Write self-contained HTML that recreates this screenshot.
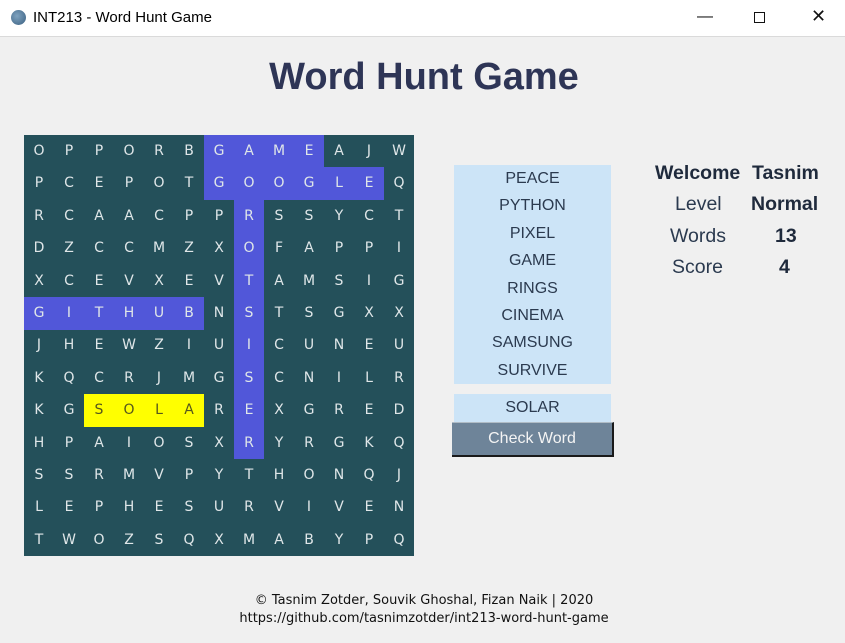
<!DOCTYPE html>
<html><head><meta charset="utf-8"><style>
*{margin:0;padding:0;box-sizing:border-box}
body{width:845px;height:643px;background:#f0f0f0;position:relative;overflow:hidden;font-family:"Liberation Sans",Arial,sans-serif}
#tb{position:absolute;left:0;top:0;width:845px;height:37px;background:#fff;border-bottom:1px solid #dadada}
#tb .t{position:absolute;left:33px;top:9px;font-size:15px;color:#000}
#tb .ic{position:absolute;left:11px;top:10px;width:15px;height:15px;border-radius:50%;background:radial-gradient(circle at 40% 40%,#7fa3c0,#3a5f80)}
.wc{position:absolute;top:5px;font-size:16px;color:#111}
h1{position:absolute;left:0;width:848px;top:56px;text-align:center;font-size:38px;font-weight:bold;color:#2e3556}
#grid{position:absolute;left:24px;top:135px;width:390px;height:421px;background:#24505a}
.hl{position:absolute;background:#5157d9}
.yl{position:absolute;background:#ffff00}
.c{position:absolute;width:30px;height:32.4px;line-height:32.4px;text-align:center;font-size:14px;color:#dfe6e8;font-family:"DejaVu Sans",sans-serif}
.c.y{color:#55571c}
#wl{position:absolute;left:454px;top:165px;width:157px;height:219px;background:#cce4f7}
#wl div{height:27.4px;line-height:27.4px;text-align:center;font-size:16px;color:#2b3a4f}
#in{position:absolute;left:454px;top:394px;width:157px;height:28px;background:#cce4f7;text-align:center;line-height:28px;font-size:16px;color:#2b3a4f}
#btn{position:absolute;left:452px;top:422px;width:162px;height:35px;background:#6e8499;border-right:2px solid #1a1a1a;border-bottom:2px solid #1a1a1a;border-top:1px solid #b0bcc6;color:#f4f4f4;text-align:center;line-height:32px;font-size:16px}
.s{position:absolute;font-size:19.5px;color:#2b3a4f}
.b{font-weight:bold;color:#1f2a3c}
#ft{position:absolute;left:0;width:848px;top:592px;text-align:center;color:#111;line-height:18px;font-family:"DejaVu Sans",sans-serif;font-size:13px}
</style></head><body>
<div id="tb"><div class="ic"></div><div class="t">INT213 - Word Hunt Game</div>
<div class="wc" style="left:697px;top:8px">&#8212;</div>
<div style="position:absolute;left:754px;top:12px;width:11px;height:11px;border:1px solid #111"></div>
<div class="wc" style="left:811px;top:6px;font-size:18px">&#10005;</div></div>
<h1>Word Hunt Game</h1>
<div id="grid">
<div class="hl" style="left:180px;top:0;width:120px;height:33px"></div>
<div class="hl" style="left:180px;top:32px;width:180px;height:33px"></div>
<div class="hl" style="left:210px;top:64px;width:30px;height:260px"></div>
<div class="hl" style="left:0;top:162px;width:180px;height:33px"></div>
<div class="yl" style="left:60px;top:259px;width:120px;height:33px"></div>
</div>
<div id="wl"><div>PEACE</div><div>PYTHON</div><div>PIXEL</div><div>GAME</div><div>RINGS</div><div>CINEMA</div><div>SAMSUNG</div><div>SURVIVE</div></div>
<div id="in">SOLAR</div>
<div id="btn">Check Word</div>
<div class="s b" style="left:655px;top:162px">Welcome</div>
<div class="s b" style="left:752px;top:162px">Tasnim</div>
<div class="s" style="left:675px;top:193px">Level</div>
<div class="s b" style="left:751px;top:193px">Normal</div>
<div class="s" style="left:670px;top:225px">Words</div>
<div class="s b" style="left:775px;top:225px">13</div>
<div class="s" style="left:672px;top:256px">Score</div>
<div class="s b" style="left:779px;top:256px">4</div>
<div id="ft">© Tasnim Zotder, Souvik Ghoshal, Fizan Naik | 2020<br>https://github.com/tasnimzotder/int213-word-hunt-game</div>
<div id="g2" style="position:absolute;left:24px;top:135px">
<div class="c" style="left:0px;top:0px">O</div><div class="c" style="left:30px;top:0px">P</div><div class="c" style="left:60px;top:0px">P</div><div class="c" style="left:90px;top:0px">O</div><div class="c" style="left:120px;top:0px">R</div><div class="c" style="left:150px;top:0px">B</div><div class="c" style="left:180px;top:0px">G</div><div class="c" style="left:210px;top:0px">A</div><div class="c" style="left:240px;top:0px">M</div><div class="c" style="left:270px;top:0px">E</div><div class="c" style="left:300px;top:0px">A</div><div class="c" style="left:330px;top:0px">J</div><div class="c" style="left:360px;top:0px">W</div>
<div class="c" style="left:0px;top:32.4px">P</div><div class="c" style="left:30px;top:32.4px">C</div><div class="c" style="left:60px;top:32.4px">E</div><div class="c" style="left:90px;top:32.4px">P</div><div class="c" style="left:120px;top:32.4px">O</div><div class="c" style="left:150px;top:32.4px">T</div><div class="c" style="left:180px;top:32.4px">G</div><div class="c" style="left:210px;top:32.4px">O</div><div class="c" style="left:240px;top:32.4px">O</div><div class="c" style="left:270px;top:32.4px">G</div><div class="c" style="left:300px;top:32.4px">L</div><div class="c" style="left:330px;top:32.4px">E</div><div class="c" style="left:360px;top:32.4px">Q</div>
<div class="c" style="left:0px;top:64.8px">R</div><div class="c" style="left:30px;top:64.8px">C</div><div class="c" style="left:60px;top:64.8px">A</div><div class="c" style="left:90px;top:64.8px">A</div><div class="c" style="left:120px;top:64.8px">C</div><div class="c" style="left:150px;top:64.8px">P</div><div class="c" style="left:180px;top:64.8px">P</div><div class="c" style="left:210px;top:64.8px">R</div><div class="c" style="left:240px;top:64.8px">S</div><div class="c" style="left:270px;top:64.8px">S</div><div class="c" style="left:300px;top:64.8px">Y</div><div class="c" style="left:330px;top:64.8px">C</div><div class="c" style="left:360px;top:64.8px">T</div>
<div class="c" style="left:0px;top:97.2px">D</div><div class="c" style="left:30px;top:97.2px">Z</div><div class="c" style="left:60px;top:97.2px">C</div><div class="c" style="left:90px;top:97.2px">C</div><div class="c" style="left:120px;top:97.2px">M</div><div class="c" style="left:150px;top:97.2px">Z</div><div class="c" style="left:180px;top:97.2px">X</div><div class="c" style="left:210px;top:97.2px">O</div><div class="c" style="left:240px;top:97.2px">F</div><div class="c" style="left:270px;top:97.2px">A</div><div class="c" style="left:300px;top:97.2px">P</div><div class="c" style="left:330px;top:97.2px">P</div><div class="c" style="left:360px;top:97.2px">I</div>
<div class="c" style="left:0px;top:129.6px">X</div><div class="c" style="left:30px;top:129.6px">C</div><div class="c" style="left:60px;top:129.6px">E</div><div class="c" style="left:90px;top:129.6px">V</div><div class="c" style="left:120px;top:129.6px">X</div><div class="c" style="left:150px;top:129.6px">E</div><div class="c" style="left:180px;top:129.6px">V</div><div class="c" style="left:210px;top:129.6px">T</div><div class="c" style="left:240px;top:129.6px">A</div><div class="c" style="left:270px;top:129.6px">M</div><div class="c" style="left:300px;top:129.6px">S</div><div class="c" style="left:330px;top:129.6px">I</div><div class="c" style="left:360px;top:129.6px">G</div>
<div class="c" style="left:0px;top:162px">G</div><div class="c" style="left:30px;top:162px">I</div><div class="c" style="left:60px;top:162px">T</div><div class="c" style="left:90px;top:162px">H</div><div class="c" style="left:120px;top:162px">U</div><div class="c" style="left:150px;top:162px">B</div><div class="c" style="left:180px;top:162px">N</div><div class="c" style="left:210px;top:162px">S</div><div class="c" style="left:240px;top:162px">T</div><div class="c" style="left:270px;top:162px">S</div><div class="c" style="left:300px;top:162px">G</div><div class="c" style="left:330px;top:162px">X</div><div class="c" style="left:360px;top:162px">X</div>
<div class="c" style="left:0px;top:194.4px">J</div><div class="c" style="left:30px;top:194.4px">H</div><div class="c" style="left:60px;top:194.4px">E</div><div class="c" style="left:90px;top:194.4px">W</div><div class="c" style="left:120px;top:194.4px">Z</div><div class="c" style="left:150px;top:194.4px">I</div><div class="c" style="left:180px;top:194.4px">U</div><div class="c" style="left:210px;top:194.4px">I</div><div class="c" style="left:240px;top:194.4px">C</div><div class="c" style="left:270px;top:194.4px">U</div><div class="c" style="left:300px;top:194.4px">N</div><div class="c" style="left:330px;top:194.4px">E</div><div class="c" style="left:360px;top:194.4px">U</div>
<div class="c" style="left:0px;top:226.8px">K</div><div class="c" style="left:30px;top:226.8px">Q</div><div class="c" style="left:60px;top:226.8px">C</div><div class="c" style="left:90px;top:226.8px">R</div><div class="c" style="left:120px;top:226.8px">J</div><div class="c" style="left:150px;top:226.8px">M</div><div class="c" style="left:180px;top:226.8px">G</div><div class="c" style="left:210px;top:226.8px">S</div><div class="c" style="left:240px;top:226.8px">C</div><div class="c" style="left:270px;top:226.8px">N</div><div class="c" style="left:300px;top:226.8px">I</div><div class="c" style="left:330px;top:226.8px">L</div><div class="c" style="left:360px;top:226.8px">R</div>
<div class="c" style="left:0px;top:259.2px">K</div><div class="c" style="left:30px;top:259.2px">G</div><div class="c y" style="left:60px;top:259.2px">S</div><div class="c y" style="left:90px;top:259.2px">O</div><div class="c y" style="left:120px;top:259.2px">L</div><div class="c y" style="left:150px;top:259.2px">A</div><div class="c" style="left:180px;top:259.2px">R</div><div class="c" style="left:210px;top:259.2px">E</div><div class="c" style="left:240px;top:259.2px">X</div><div class="c" style="left:270px;top:259.2px">G</div><div class="c" style="left:300px;top:259.2px">R</div><div class="c" style="left:330px;top:259.2px">E</div><div class="c" style="left:360px;top:259.2px">D</div>
<div class="c" style="left:0px;top:291.6px">H</div><div class="c" style="left:30px;top:291.6px">P</div><div class="c" style="left:60px;top:291.6px">A</div><div class="c" style="left:90px;top:291.6px">I</div><div class="c" style="left:120px;top:291.6px">O</div><div class="c" style="left:150px;top:291.6px">S</div><div class="c" style="left:180px;top:291.6px">X</div><div class="c" style="left:210px;top:291.6px">R</div><div class="c" style="left:240px;top:291.6px">Y</div><div class="c" style="left:270px;top:291.6px">R</div><div class="c" style="left:300px;top:291.6px">G</div><div class="c" style="left:330px;top:291.6px">K</div><div class="c" style="left:360px;top:291.6px">Q</div>
<div class="c" style="left:0px;top:324px">S</div><div class="c" style="left:30px;top:324px">S</div><div class="c" style="left:60px;top:324px">R</div><div class="c" style="left:90px;top:324px">M</div><div class="c" style="left:120px;top:324px">V</div><div class="c" style="left:150px;top:324px">P</div><div class="c" style="left:180px;top:324px">Y</div><div class="c" style="left:210px;top:324px">T</div><div class="c" style="left:240px;top:324px">H</div><div class="c" style="left:270px;top:324px">O</div><div class="c" style="left:300px;top:324px">N</div><div class="c" style="left:330px;top:324px">Q</div><div class="c" style="left:360px;top:324px">J</div>
<div class="c" style="left:0px;top:356.4px">L</div><div class="c" style="left:30px;top:356.4px">E</div><div class="c" style="left:60px;top:356.4px">P</div><div class="c" style="left:90px;top:356.4px">H</div><div class="c" style="left:120px;top:356.4px">E</div><div class="c" style="left:150px;top:356.4px">S</div><div class="c" style="left:180px;top:356.4px">U</div><div class="c" style="left:210px;top:356.4px">R</div><div class="c" style="left:240px;top:356.4px">V</div><div class="c" style="left:270px;top:356.4px">I</div><div class="c" style="left:300px;top:356.4px">V</div><div class="c" style="left:330px;top:356.4px">E</div><div class="c" style="left:360px;top:356.4px">N</div>
<div class="c" style="left:0px;top:388.8px">T</div><div class="c" style="left:30px;top:388.8px">W</div><div class="c" style="left:60px;top:388.8px">O</div><div class="c" style="left:90px;top:388.8px">Z</div><div class="c" style="left:120px;top:388.8px">S</div><div class="c" style="left:150px;top:388.8px">Q</div><div class="c" style="left:180px;top:388.8px">X</div><div class="c" style="left:210px;top:388.8px">M</div><div class="c" style="left:240px;top:388.8px">A</div><div class="c" style="left:270px;top:388.8px">B</div><div class="c" style="left:300px;top:388.8px">Y</div><div class="c" style="left:330px;top:388.8px">P</div><div class="c" style="left:360px;top:388.8px">Q</div>
</div>
</body></html>
